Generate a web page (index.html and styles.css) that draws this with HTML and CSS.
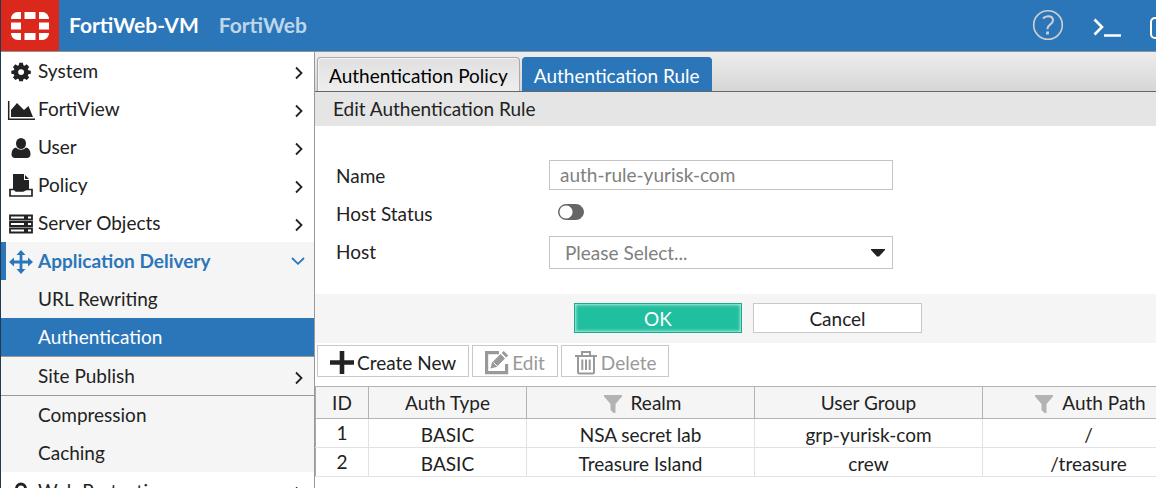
FILE: index.html
```html
<!DOCTYPE html>
<html lang="en">
<head>
<meta charset="utf-8">
<title>FortiWeb-VM</title>
<link rel="stylesheet" href="styles.css">
</head>
<body>
<svg class="defs" aria-hidden="true">
  <symbol id="chev" viewBox="0 0 10 14"><path d="M2 1.500 7.500 7 2 12.500" fill="none" stroke="currentColor" stroke-width="1.800"/></symbol>
  <symbol id="funnel" viewBox="0 0 18 18"><path d="M0 0h18v1.500L11.500 9v9h-2L6.500 15V9L0 1.500z" fill="#b3b3b3"/></symbol>
</svg>
<header class="topbar">
  <div class="logo">
    <svg width="40" height="28" viewBox="0 0 40 28" fill="#fff" aria-label="Fortinet">
      <path d="M14.500 0h11v7h-11zM14.500 21h11v7h-11zM1 10.500h10v7H1zM29 10.500h10v7H29zM1 7C1 3 4 0 8 0h3v7zM29 0h3c4 0 7 3 7 7H29zM1 21h10v7H8c-4 0-7-3-7-7zM29 21h10c0 4-3 7-7 7h-3z"/>
    </svg>
  </div>
  <span class="product">FortiWeb-VM</span>
  <span class="host">FortiWeb</span>
  <nav class="tools">
    <button class="tool" type="button" aria-label="Help"><svg width="32" height="32" viewBox="0 0 32 32" fill="none" stroke="#d0d0d0" stroke-width="2"><circle cx="16" cy="16" r="14.300" stroke-width="1.600"/><path d="M11 9.500C12.500 7.800 14.200 7.300 16 7.300c3 0 5 1.500 5 4.200 0 3.700-5.500 4-5.500 8v.8"/><path d="M15.500 22.500v3" stroke-width="2.800"/></svg></button>
    <button class="tool" type="button" aria-label="Console"><svg width="28" height="20" viewBox="0 0 28 20" fill="none" stroke="#fff" stroke-width="2.600"><path d="M1.500 1.500 9 9l-7.500 7.500M11 17.500h17"/></svg></button>
    <button class="tool" type="button" aria-label="Full screen"><svg width="6" height="23" viewBox="0 0 6 23" fill="none" stroke="#fff" stroke-width="2"><rect x="1" y="1" width="22" height="20" rx="4"/></svg></button>
  </nav>
</header>
<div class="page">
  <nav class="sidebar">
    <a class="item" href="#"><svg class="ico" viewBox="0 0 24 24"><path fill="currentColor" fill-rule="evenodd" d="M9.800 2h4.400l.5 3 1.500.7L18.700 4l3 3-1.700 2.400.6 1.500 3 .6v3.600l-3 .7-.6 1.400 1.700 2.500-3 3-2.500-1.700-1.500.6-.5 2.400H9.800l-.5-2.400-1.500-.6-2.500 1.700-3-3L4 17.200l-.6-1.400-3-.7v-3.600l3-.6L4 9.400 2.300 7l3-3 2.500 1.700 1.500-.7zM12 9.700a3.500 3.500 0 1 0 0 7 3.500 3.500 0 0 0 0-7z" transform="translate(2 1) scale(.84)"/></svg><span>System</span><svg class="chev"><use href="#chev"/></svg></a>
    <a class="item" href="#"><svg class="ico wide" viewBox="0 0 28 24"><path fill="none" stroke="currentColor" stroke-width="1.500" d="M1.700 3v18.200H28"/><path fill="currentColor" d="M4 19v-7l6-7 7 7 4.500-4L26 19z"/></svg><span>FortiView</span><svg class="chev"><use href="#chev"/></svg></a>
    <a class="item" href="#"><svg class="ico" viewBox="0 0 24 24" fill="currentColor"><ellipse cx="12" cy="7.500" rx="5" ry="5.500"/><path d="M7 11.500c3 3 7 3 10 0 3 .5 4.500 3 4.500 7 0 2.200-1.500 3.500-3.500 3.500H6c-2 0-3.500-1.300-3.500-3.500 0-4 1.500-6.500 4.500-7z"/></svg><span>User</span><svg class="chev"><use href="#chev"/></svg></a>
    <a class="item" href="#"><svg class="ico" viewBox="0 0 24 24"><path fill="currentColor" d="M4 0h11v6h5v12H4zM16 1l4 4h-4z"/><path fill="#fff" stroke="currentColor" stroke-width="1.700" d="M1 15.500h4.500l1.500 1.500h7l3-1.500H23V22H1z"/></svg><span>Policy</span><svg class="chev"><use href="#chev"/></svg></a>
    <a class="item" href="#"><svg class="ico" viewBox="0 0 24 24"><path fill="none" stroke="currentColor" stroke-width="1.800" d="M1 3.500h22v4H1zM1 10h22v4H1zM1 16.500h22v4H1z"/><path fill="currentColor" d="M15 3h4v5h-4zM15 10h4v4h-4zM15 16h4v5h-4z"/></svg><span>Server Objects</span><svg class="chev"><use href="#chev"/></svg></a>
    <a class="item open" href="#"><svg class="ico" viewBox="0 0 24 24"><path fill="none" stroke="currentColor" stroke-width="2.800" d="M12 3v18M3 12h18"/><path fill="currentColor" d="m12 0 4.500 5h-9zM12 24l-4.500-5h9zM0 12l5-4.500v9zM24 12l-5 4.500v-9z"/></svg><span>Application Delivery</span><svg class="chev down" viewBox="0 0 14 10"><path d="M1 2l6 5.800L13 2" fill="none" stroke="currentColor" stroke-width="1.800"/></svg></a>
    <a class="item sub" href="#">URL Rewriting</a>
    <a class="item sub current" href="#">Authentication</a>
    <a class="item sub ruled" href="#"><span>Site Publish</span><svg class="chev"><use href="#chev"/></svg></a>
    <a class="item sub" href="#">Compression</a>
    <a class="item sub" href="#">Caching</a>
    <a class="item" href="#"><svg class="ico" viewBox="0 0 24 24"><path fill="none" stroke="currentColor" stroke-width="2.800" d="M7.500 12V8.500a4.500 4.500 0 0 1 9 0V12"/><path fill="currentColor" d="M4 11h16v12H4z"/></svg><span>Web Protection</span><svg class="chev"><use href="#chev"/></svg></a>
  </nav>
  <main class="main">
    <div class="tabs">
      <button class="tab" type="button">Authentication Policy</button>
      <button class="tab active" type="button">Authentication Rule</button>
    </div>
    <h1 class="title">Edit Authentication Rule</h1>
    <form>
      <div class="fields">
        <label for="name">Name</label>
        <input class="box" id="name" type="text" value="auth-rule-yurisk-com">
        <label for="status">Host Status</label>
        <input class="switch" id="status" type="checkbox">
        <label for="hostsel">Host</label>
        <div class="pick">
          <select class="box" id="hostsel"><option>Please Select...</option></select>
          <svg class="caret" width="14" height="8" viewBox="0 0 14 8"><path d="M0 0h14v1L8 7.500H6L0 1z" fill="#222"/></svg>
        </div>
      </div>
      <div class="actions">
        <button class="btn ok" type="button">OK</button>
        <button class="btn" type="button">Cancel</button>
      </div>
    </form>
    <div class="toolbar">
      <button class="act" type="button"><svg width="24" height="24" viewBox="0 0 24 24"><path d="M12 0v23M0 11.500h24" stroke="#222" stroke-width="4.600"/></svg>Create New</button>
      <button class="act" type="button" disabled><svg width="24" height="24" viewBox="0 0 24 24"><path d="M14 1.600H1.600v20h20V13" fill="none" stroke="#999" stroke-width="3.200"/><path d="M5.500 17.500l1.500-6L15.500 3l4.500 4.500-8.500 8.500zM16.700 2 18.700 0l4.500 4.500-2 2z" fill="#999"/><path d="M8.500 11.500l3.500 3.500" stroke="#fff"/></svg>Edit</button>
      <button class="act" type="button" disabled><svg width="24" height="24" viewBox="0 0 24 24" fill="none" stroke="#999" stroke-width="2"><path d="M1 5h22M8 5V1h8v4M4 6v15c0 .8.700 1.500 1.500 1.500h13c.8 0 1.500-.7 1.500-1.500V6M8.300 8.500v10.500M12 8.500v10.500M15.700 8.500v10.500"/></svg>Delete</button>
    </div>
    <table class="grid">
      <colgroup><col class="c-id"><col class="c-type"><col class="c-wide"><col class="c-wide"><col class="c-path"></colgroup>
      <thead><tr><th>ID</th><th>Auth Type</th><th><svg class="fun"><use href="#funnel"/></svg>Realm</th><th>User Group</th><th><svg class="fun"><use href="#funnel"/></svg>Auth Path</th></tr></thead>
      <tbody>
        <tr><td>1</td><td>BASIC</td><td>NSA secret lab</td><td>grp-yurisk-com</td><td>/</td></tr>
        <tr><td>2</td><td>BASIC</td><td>Treasure Island</td><td>crew</td><td>/treasure</td></tr>
      </tbody>
    </table>
  </main>
</div>
</body>
</html>
```
FILE: styles.css
```css
* { box-sizing: border-box; }
body {
  margin: 0;
  height: 100vh;
  overflow: hidden;
  display: flex;
  flex-direction: column;
  border-left: 1px solid #1f3a52;
  background: #fff;
  color: #222;
  font: 19px/24px Lato, "Liberation Sans", sans-serif;
}
button, input, select { font: inherit; color: inherit; margin: 0; }
.defs { position: absolute; width: 0; height: 0; }

.topbar {
  flex: none;
  display: flex;
  align-items: center;
  height: 52px;
  padding-bottom: 1px;
  background: #2b76b9;
  border-bottom: 1px solid #8c9298;
  color: #fff;
  font-size: 21px;
  font-weight: 700;
}
.logo {
  flex: none;
  display: flex;
  align-items: center;
  justify-content: center;
  align-self: flex-start;
  width: 58px;
  height: 51px;
  background: #da291c;
}
.product { margin-left: 10px; }
.host { margin-left: 20px; color: #bdd6ea; }
.tools { display: flex; align-items: center; gap: 29px; margin-left: auto; }
.tool { display: flex; padding: 0; border: 0; background: none; }
.tool + .tool { padding-top: 6px; }

.page { flex: 1; display: flex; min-height: 0; }
.sidebar {
  flex: none;
  width: 314px;
  overflow: hidden;
  border-right: 1px solid #999;
}
.item {
  display: flex;
  align-items: center;
  height: 38px;
  padding: 0 10px 0 8px;
  color: #222;
  text-decoration: none;
}
.ico { width: 24px; height: 24px; margin-right: 5px; margin-top: 2px; }
.wide { width: 28px; margin-left: -2px; margin-right: 3px; }
.chev { width: 10px; height: 14px; margin-left: auto; margin-top: 4px; }
.down { width: 14px; height: 10px; margin-top: 0; }
.open {
  padding-left: 3px;
  padding-right: 9px;
  border-left: 5px solid #2b76b9;
  background: #f5f5f5;
  color: #2b76b9;
  font-weight: 700;
}
.sub { padding-left: 37px; background: #f5f5f5; }
.current { background: #2b76b9; color: #fff; }
.ruled { height: 40px; border: solid #999; border-width: 1px 0; }

.main { flex: 1; min-width: 0; overflow: hidden; }
.tabs {
  display: flex;
  gap: 2px;
  padding: 5px 2px 0;
  height: 40px;
  border-bottom: 1px solid #666;
  background: linear-gradient(#ededed, #d6d6d6);
}
.tab {
  padding: 2px 11px 0;
  border: 1px solid #aaa;
  border-bottom: 0;
  border-radius: 4px 4px 0 0;
  background: linear-gradient(#e0e0e0, #eee);
  box-shadow: inset 1px 1px #f5f5f5;
  color: #000;
}
.active { border-color: #2b76b9; background: #2b76b9; box-shadow: none; color: #fff; }
.title {
  margin: 0;
  padding: 5px 18px;
  background: #e5e5e5;
  font-size: 19px;
  font-weight: 400;
}
.fields {
  display: grid;
  grid-template-columns: 213px 344px;
  grid-template-rows: 32px 30px 31px;
  row-gap: 7px;
  align-items: center;
  padding: 34px 21px 27px;
}
.box {
  display: block;
  width: 100%;
  height: 30px;
  padding: 0 10px 1px;
  border: 1px solid #c4c4c4;
  border-radius: 0;
  background: #fff;
  color: #808080;
}
input.box { align-self: start; }
.pick { position: relative; align-self: start; }
select.box { height: 33px; padding: 0 15px; appearance: none; }
.caret { position: absolute; right: 8px; top: 13px; pointer-events: none; }
.switch {
  appearance: none;
  justify-self: start;
  width: 26px;
  height: 16px;
  margin-left: 9px;
  margin-bottom: 4px;
  border-radius: 8px;
  border: 1px solid #666;
  background: radial-gradient(circle at 7px 7px, #fff 6px, #666 7px);
}
.actions {
  display: flex;
  gap: 11px;
  padding: 9px 0 10px 259px;
  background: #f5f5f5;
}
.btn {
  width: 169px;
  height: 30px;
  padding: 2px 0 0;
  border: 1px solid #c8c8c8;
  background: #fff;
}
.ok {
  width: 168px;
  border-color: #1aab8a;
  background: #20bf9f;
  box-shadow: inset 0 0 3px 1px #b8eadf;
  color: #fff;
}
.toolbar { display: flex; gap: 3px; padding: 2px 2px 9px; }
.act {
  display: flex;
  align-items: center;
  gap: 3px;
  height: 32px;
  padding: 3px 12px 0;
  border: 1px solid #c8c8c8;
  background: #fff;
}
.act:disabled { color: #999; }

.grid {
  table-layout: fixed;
  width: 880px;
  border-collapse: collapse;
}
.c-id { width: 53px; }
.c-type { width: 158px; }
.c-wide { width: 228px; }
.grid th {
  height: 32px;
  padding: 0;
  border: 1px solid #b3b3b3;
  background: #f5f5f5;
  font-weight: 400;
}
.grid td {
  height: 29px;
  padding: 3px 0 0;
  border: 1px solid #e2e2e2;
  text-align: center;
}
.grid td:first-child { padding: 0; }
.grid td:first-child, .grid th:first-child { border-left-color: #aaa; }
.fun { width: 18px; height: 18px; margin-left: 4px; margin-right: 9px; vertical-align: -3px; }
```
